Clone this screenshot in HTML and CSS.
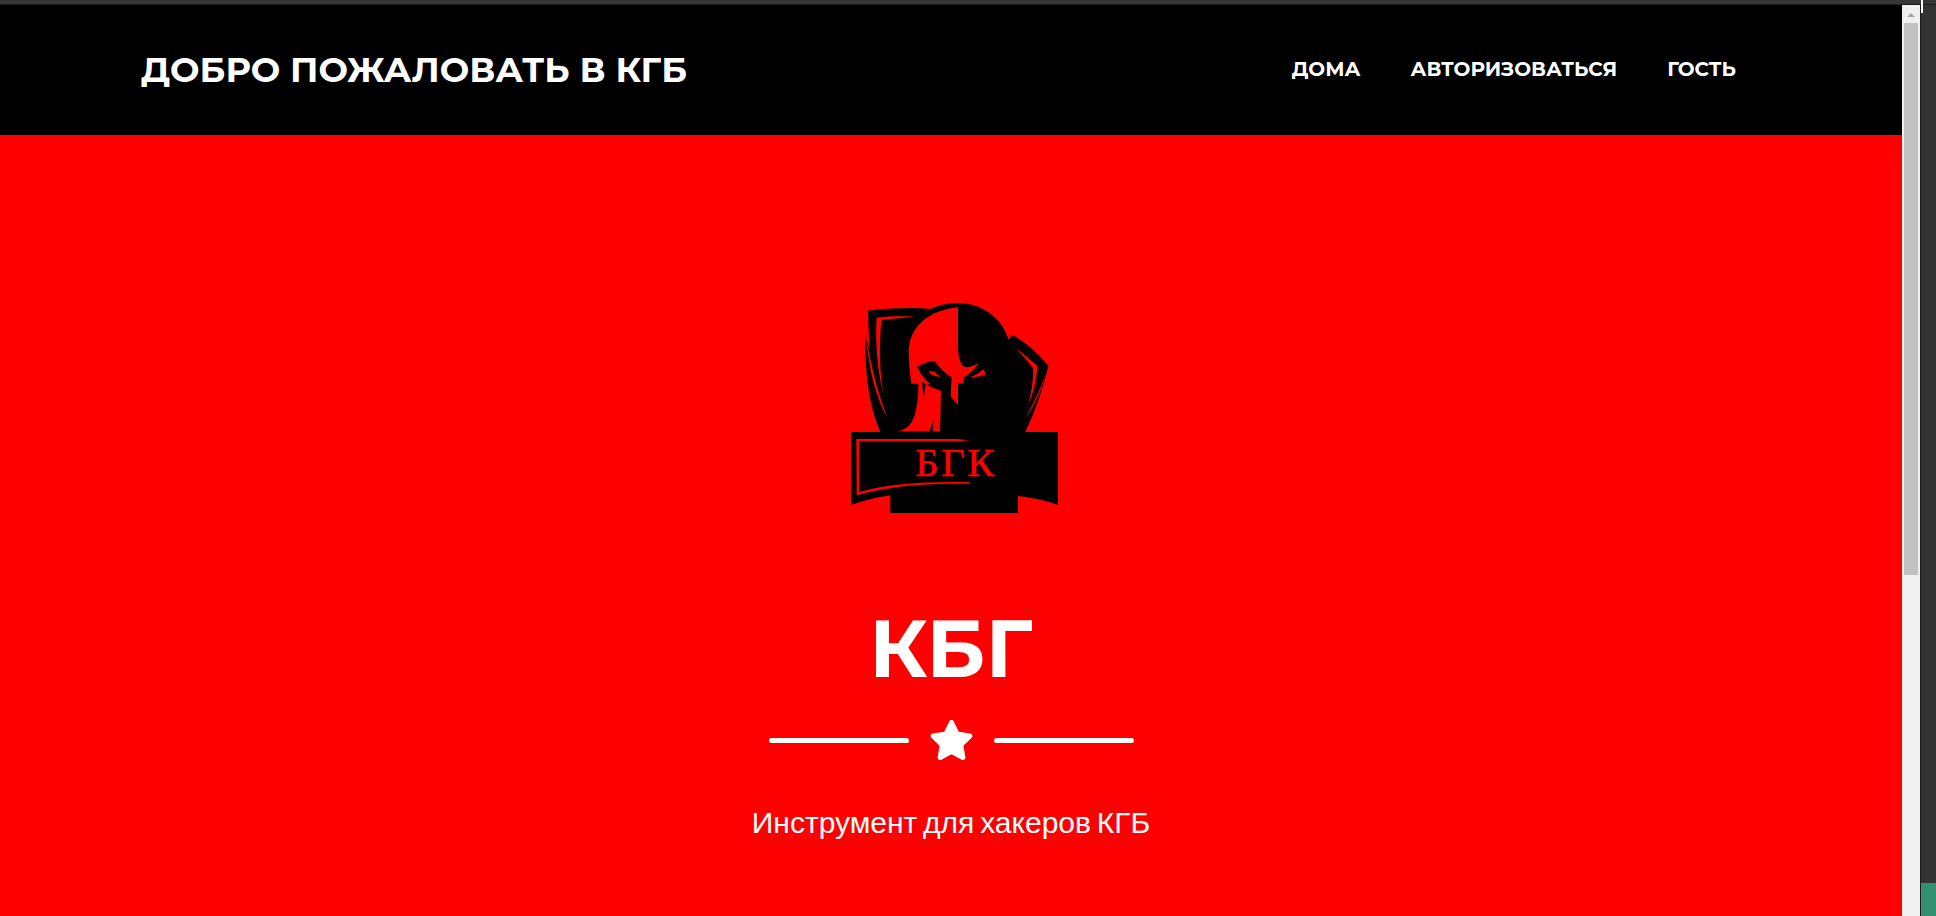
FILE: index.html
```html
<!DOCTYPE html>
<html lang="ru">
<head>
<meta charset="utf-8">
<title>КГБ</title>
<link rel="stylesheet" href="styles.css">
</head>
<body>
<div class="window">
  <div class="topbar"></div>
  <div class="body">
    <div class="page">
      <header class="nav">
        <a class="brand">ДОБРО ПОЖАЛОВАТЬ В КГБ</a>
        <nav class="links"><a class="home">ДОМА</a><a class="login">АВТОРИЗОВАТЬСЯ</a><a class="guest">ГОСТЬ</a></nav>
      </header>
      <main class="hero">
        <svg class="logo" viewBox="0 0 690 705">
          <path d="M84 62C150 53 220 52 272 57C300 42 330 39 356 39C440 42 490 95 505 148L518 135Q582 172 625 228C608 300 585 365 556 426H654V645Q600 625 534 618V669H151V616Q90 625 33 645V426H121C95 365 74 280 76 135L88 180Z"/>
          <g class="cut">
            <path d="M354 52C270 60 207 108 206 185C206 220 210 250 214 281H235C235 310 234 330 230 348C224 390 210 418 170 424H268L280 390L278 424H300L303 301L331 262V318L354 345V280H371V262Q396 248 418 218Q390 234 374 231Q356 220 354 180Z"/>
            <path d="M110 83C150 78 190 78 222 80L124 90C118 160 118 250 131 315C113 250 105 160 110 83Z"/>
            <path d="M78 150C88 240 108 325 142 383C118 320 98 250 85 178Z"/>
            <path d="M528 174L592 227C590 270 580 310 565 343C575 300 581 265 579 233Z"/>
            <path d="M622 240C606 295 585 345 558 383C580 340 604 290 622 240Z"/>
            <path d="M49 447H350L390 451L350 454H57V606C150 581 260 574 390 577V581C260 580 150 586 50 616Z"/>
          </g>
          <path d="M232 230Q255 215 285 213Q303 243 335 262L332 318L303 320V302Q280 297 259 283H272Q246 262 232 230ZM246 275L251 328L257 282Z"/>
          <path class="cut" d="M268 240Q266 258 303 261Q288 255 285 244Q275 248 268 240ZM390 262Q420 250 428 238Q438 245 435 254Q420 260 390 262Z"/>
          <text class="cut emblem" x="226" y="558" textLength="237">БГК</text>
        </svg>
        <h1 class="title">КБГ</h1>
        <div class="divider">
          <span class="line"></span>
          <svg class="star" viewBox="0 0 576 512"><path d="M259.3 17.8L194 150.200 47.900 171.500c-26.200 3.800-36.700 36.100-17.700 54.600l105.700 103-25 145.500c-4.500 26.300 23.200 46 46.400 33.700L288 439.600l130.700 68.700c23.200 12.200 50.900-7.400 46.400-33.700l-25-145.500 105.700-103c19-18.500 8.500-50.800-17.700-54.600L382 150.200 316.700 17.800c-11.700-23.600-45.600-23.900-57.400 0z"/></svg>
          <span class="line"></span>
        </div>
        <p class="subtitle">Инструмент для хакеров КГБ</p>
      </main>
    </div>
    <div class="scrollbar"><svg class="arrow" viewBox="0 0 8 4"><path d="M0 4L4 0L8 4Z"/></svg><div class="thumb"></div></div>
    <div class="side"><div class="green"></div></div>
  </div>
  <div class="mark"></div>
</div>
</body>
</html>
```
FILE: styles.css
```css
body { margin: 0; }
.window { position: relative; width: 1936px; height: 916px; overflow: hidden; display: flex; flex-direction: column; }
.topbar { box-sizing: border-box; height: 5px; background: #373737; border-bottom: 1px solid #1a1a1a; }
.body { flex: 1; display: flex; }
.page { width: 1902px; display: flex; flex-direction: column; background: #f00; }
.nav { height: 130px; box-sizing: border-box; padding: 0 166px 0 141px; background: #000; color: #fff; display: flex; justify-content: space-between; align-items: center; font-family: Montserrat, Inter, sans-serif; font-weight: 700; }
.brand { font-size: 35px; line-height: 50px; white-space: nowrap; }
.links { display: flex; gap: 50px; padding-bottom: 2px; font-size: 20px; line-height: 30px; white-space: nowrap; }
.hero { flex: 1; display: flex; flex-direction: column; align-items: center; color: #fff; }
.logo { width: 230px; height: 235px; margin: 155px 0 0 8px; }
.cut { fill: #f00; }
.emblem { font-family: "Liberation Serif", serif; font-size: 122px; stroke: #f00; stroke-width: 1.5px; }
.title { margin: 74px 0 0; font: 700 80px/100px Montserrat, Inter, sans-serif; }
.divider { display: flex; align-items: center; justify-content: center; margin-top: 18px; height: 46px; }
.line { width: 140px; height: 5px; border-radius: 2.5px; background: #fff; }
.star { width: 45px; height: 40px; margin: 0 20px; fill: #fff; }
.subtitle { margin: 37px 0 0; font: 30px/45px "Liberation Sans", sans-serif; word-spacing: -2.5px; white-space: nowrap; }
.scrollbar { width: 18px; background: #f0f0f0; display: flex; flex-direction: column; align-items: center; }
.arrow { width: 8px; height: 4px; margin: 8px 0 6px; fill: #a3a3a3; }
.thumb { width: 14px; height: 552px; background: #c1c1c1; }
.side { box-sizing: border-box; width: 16px; border-left: 1px solid #1a1a1a; background: #333; display: flex; align-items: flex-end; }
.green { width: 15px; height: 33px; background: #339070; }
.mark { position: absolute; left: 1921px; top: 0; width: 2px; height: 13px; background: #fff; }
```
